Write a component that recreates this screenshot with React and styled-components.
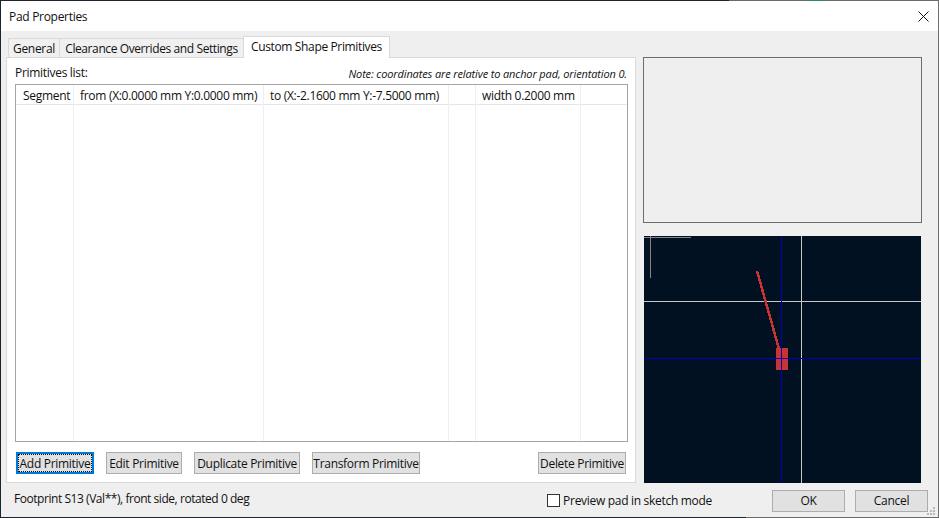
import styled, { createGlobalStyle } from 'styled-components';

const GlobalStyle = createGlobalStyle`
  html, body {
    margin: 0;
    padding: 0;
    background: #1a1a1a;
  }
  * {
    box-sizing: border-box;
  }
`;

// Ventana del dialogo
const Window = styled.div`
  width: 939px;
  height: 518px;
  display: flex;
  flex-direction: column;
  background: #efefef;
  border-left: 1px solid #1c2430;
  border-right: 1px solid #6e6e6e;
  font-family: 'Open Sans', 'Noto Sans', sans-serif;
  font-size: 12px;
  letter-spacing: -0.3px;
  color: #111;
  overflow: hidden;
`;

// Lo que se ve detras de la ventana, borde superior
const TopEdge = styled.div`
  height: 1px;
  flex: none;
  background: linear-gradient(
    to right,
    #1c2430 728px,
    #6a6a6a 728px,
    #6a6a6a 808px,
    #1f8a80 808px,
    #1f8a80 822px,
    #6a6a6a 822px
  );
`;

const BottomEdge = styled.div`
  height: 1px;
  flex: none;
  background: linear-gradient(to right, #1c2430 745px, #6a6a6a 745px);
`;

const TitleBar = styled.div`
  height: 30px;
  flex: none;
  display: flex;
  align-items: center;
  justify-content: space-between;
  padding: 0 8px;
  background: #fff;
`;

const Title = styled.span`
  font-size: 12px;
`;

const CloseIcon = styled.svg`
  width: 11px;
  height: 11px;
  margin-right: 1px;
`;

const Body = styled.div`
  flex: 1;
  display: grid;
  grid-template-columns: 630px 1fr;
  column-gap: 7px;
  padding: 5px 0 0 5px;
`;

const LeftColumn = styled.div`
  display: flex;
  flex-direction: column;
`;

const TabRow = styled.div`
  height: 22px;
  display: flex;
  align-items: flex-end;
  padding-left: 2px;
  position: relative;
  z-index: 1;
`;

const Tab = styled.div`
  width: ${(p) => p.$w}px;
  height: ${(p) => (p.$active ? '22px' : '20px')};
  padding: ${(p) => (p.$active ? '0 0 3px' : '1px 0 0')};
  display: flex;
  align-items: center;
  justify-content: center;
  white-space: nowrap;
  background: ${(p) => (p.$active ? '#fff' : '#f0f0f0')};
  border: 1px solid #d9d9d9;
  border-bottom: ${(p) => (p.$active ? 'none' : '1px solid #d9d9d9')};
  margin-left: ${(p) => (p.$first ? '0' : '-1px')};
  letter-spacing: ${(p) => p.$spacing || '-0.3px'};
`;

const Panel = styled.div`
  width: 630px;
  height: 426px;
  margin-top: -1px;
  background: #fff;
  border: 1px solid #d9d9d9;
  display: flex;
  flex-direction: column;
  padding: 6px 7px 8px 8px;
`;

const ListHeader = styled.div`
  height: 20px;
  display: flex;
  justify-content: space-between;
  align-items: flex-start;
  padding-right: 1px;
`;

const Note = styled.span`
  font-size: 11px;
  font-style: italic;
  margin-top: 2px;
  letter-spacing: -0.13px;
`;

const ListBox = styled.div`
  flex: 1;
  border: 1px solid #a5a5a5;
  display: flex;
  flex-direction: column;
  background: #fff;
`;

const Row = styled.div`
  display: grid;
  grid-template-columns: 58px 190px 185px 27px 105px 1fr;
  height: ${(p) => (p.$fill ? 'auto' : '20px')};
  flex: ${(p) => (p.$fill ? '1' : 'none')};
  border-bottom: ${(p) => (p.$fill ? 'none' : '1px solid #e6e6e6')};
`;

const Cell = styled.div`
  border-right: 1px solid #e6effa;
  padding: 1px 0 0 6px;
  line-height: 20px;
  white-space: nowrap;
  &:first-child {
    padding-left: 7px;
  }
  &:last-child {
    border-right: none;
  }
`;

const ButtonRow = styled.div`
  display: flex;
  gap: 12px;
  margin-top: 10px;
  padding: 0 2px 0 1px;
`;

const Button = styled.div`
  height: 22px;
  width: ${(p) => p.$w}px;
  padding-top: 1px;
  display: flex;
  align-items: center;
  justify-content: center;
  background: #e1e1e1;
  border: 1px solid #adadad;
  white-space: nowrap;
  margin-left: ${(p) => (p.$push ? 'auto' : '0')};
`;

const FocusButton = styled(Button)`
  border: 2px solid #0078d7;
  outline: 1px dotted #111;
  outline-offset: -3px;
`;

const RightColumn = styled.div`
  display: flex;
  flex-direction: column;
  width: 279px;
  padding-top: 21px;
`;

const PreviewBox = styled.div`
  height: 166px;
  border: 1px solid #6d6d6d;
`;

const Canvas = styled.svg`
  display: block;
  width: 277px;
  height: 247px;
  margin: 13px 0 0 1px;
  background: #011122;
`;

const Footer = styled.div`
  height: 33px;
  flex: none;
  display: flex;
  align-items: center;
  padding: 0 10px 0 13px;
`;

const Status = styled.span`
  flex: 1;
  padding-bottom: 4px;
  letter-spacing: -0.45px;
`;

const CheckRow = styled.label`
  display: flex;
  align-items: center;
  gap: 3px;
  margin-right: 60px;
`;

const CheckBox = styled.span`
  width: 13px;
  height: 13px;
  background: #fff;
  border: 1px solid #333;
`;

const DialogButton = styled(Button)`
  width: 73px;
  padding-top: 0;
  margin-left: ${(p) => (p.$first ? '0' : '10px')};
`;

const Grip = styled.svg`
  position: absolute;
  left: 925px;
  top: 505px;
  width: 12px;
  height: 12px;
`;

const columns = ['Segment', 'from (X:0.0000 mm Y:0.0000 mm)', 'to (X:-2.1600 mm Y:-7.5000 mm)', '', 'width 0.2000 mm', ''];

const App = () => {
  return (
    <>
      <GlobalStyle />
      <Window>
        <TopEdge />
        <TitleBar>
          <Title>Pad Properties</Title>
          <CloseIcon viewBox="0 0 11 11">
            <path d="M0.5 0.5L10.5 10.5M10.5 0.5L0.5 10.5" stroke="#111" strokeWidth="1" fill="none" />
          </CloseIcon>
        </TitleBar>
        <Body>
          <LeftColumn>
            <TabRow>
              <Tab $first $w={52}>General</Tab>
              <Tab $w={185} $spacing="-0.4px">Clearance Overrides and Settings</Tab>
              <Tab $active $w={147} $spacing="-0.36px">Custom Shape Primitives</Tab>
            </TabRow>
            <Panel>
              <ListHeader>
                <span>Primitives list:</span>
                <Note>Note: coordinates are relative to anchor pad, orientation 0.</Note>
              </ListHeader>
              <ListBox>
                <Row>
                  {columns.map((text, i) => (
                    <Cell key={i}>{text}</Cell>
                  ))}
                </Row>
                <Row $fill>
                  {columns.map((_, i) => (
                    <Cell key={i} />
                  ))}
                </Row>
              </ListBox>
              <ButtonRow>
                <FocusButton $w={78}>Add Primitive</FocusButton>
                <Button $w={76}>Edit Primitive</Button>
                <Button $w={106}>Duplicate Primitive</Button>
                <Button $w={108}>Transform Primitive</Button>
                <Button $w={88} $push>Delete Primitive</Button>
              </ButtonRow>
            </Panel>
          </LeftColumn>
          <RightColumn>
            <PreviewBox />
            <Canvas viewBox="644 236 277 247" shapeRendering="crispEdges">
              <path d="M644 237.5H691M650.5 236V278" stroke="#848484" fill="none" />
              <path d="M644 301.5H921M801.5 236V483" stroke="#c8c8c8" fill="none" />
              <path d="M757 271L779 349" stroke="#c83434" strokeWidth="2.5" fill="none" />
              <rect x="776" y="348" width="12" height="22" fill="#c83434" />
              <path d="M644 358.5H921M781.5 236V483" stroke="#0000c0" fill="none" />
            </Canvas>
          </RightColumn>
        </Body>
        <Footer>
          <Status>Footprint S13 (Val**), front side, rotated 0 deg</Status>
          <CheckRow>
            <CheckBox />
            Preview pad in sketch mode
          </CheckRow>
          <DialogButton $first>OK</DialogButton>
          <DialogButton>Cancel</DialogButton>
        </Footer>
        <BottomEdge />
        <Grip viewBox="0 0 12 12">
          <path d="M8 2h2v2H8zM5 5h2v2H5zM8 5h2v2H8zM2 8h2v2H2zM5 8h2v2H5zM8 8h2v2H8z" fill="#b8b8b8" />
        </Grip>
      </Window>
    </>
  );
};

export default App;
